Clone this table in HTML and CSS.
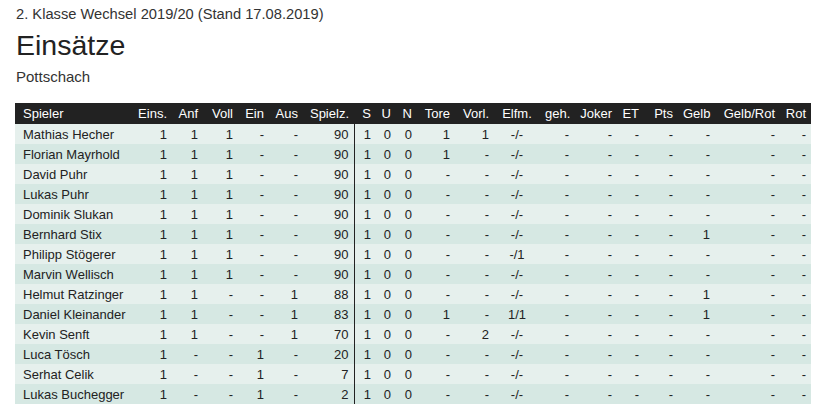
FILE: index.html
```html
<!DOCTYPE html>
<html lang="de">
<head>
<meta charset="utf-8">
<title>Einsätze</title>
<link rel="stylesheet" href="styles.css">
</head>
<body>
<div class="season">2. Klasse Wechsel 2019/20 (Stand 17.08.2019)</div>
<h1 class="title">Einsätze</h1>
<div class="team">Pottschach</div>
<table class="stats">
  <colgroup>
    <col class="w-name"><col class="w-eins"><col class="w-anf"><col class="w-voll"><col class="w-ein"><col class="w-aus"><col class="w-spielz"><col class="w-s"><col class="w-u"><col class="w-n"><col class="w-tore"><col class="w-vorl"><col class="w-elfm"><col class="w-geh"><col class="w-joker"><col class="w-et"><col class="w-pts"><col class="w-gelb"><col class="w-gr"><col class="w-rot">
  </colgroup>
  <thead>
    <tr><th class="name">Spieler</th><th>Eins.</th><th>Anf</th><th>Voll</th><th>Ein</th><th>Aus</th><th>Spielz.</th><th>S</th><th>U</th><th>N</th><th>Tore</th><th>Vorl.</th><th class="mid">Elfm.</th><th>geh.</th><th>Joker</th><th>ET</th><th>Pts</th><th>Gelb</th><th>Gelb/Rot</th><th>Rot</th></tr>
  </thead>
  <tbody>
    <tr><td class="name">Mathias Hecher</td><td>1</td><td>1</td><td>1</td><td>-</td><td>-</td><td class="sep">90</td><td>1</td><td>0</td><td>0</td><td>1</td><td>1</td><td class="mid">-/-</td><td>-</td><td>-</td><td>-</td><td>-</td><td>-</td><td>-</td><td>-</td></tr>
    <tr><td class="name">Florian Mayrhold</td><td>1</td><td>1</td><td>1</td><td>-</td><td>-</td><td class="sep">90</td><td>1</td><td>0</td><td>0</td><td>1</td><td>-</td><td class="mid">-/-</td><td>-</td><td>-</td><td>-</td><td>-</td><td>-</td><td>-</td><td>-</td></tr>
    <tr><td class="name">David Puhr</td><td>1</td><td>1</td><td>1</td><td>-</td><td>-</td><td class="sep">90</td><td>1</td><td>0</td><td>0</td><td>-</td><td>-</td><td class="mid">-/-</td><td>-</td><td>-</td><td>-</td><td>-</td><td>-</td><td>-</td><td>-</td></tr>
    <tr><td class="name">Lukas Puhr</td><td>1</td><td>1</td><td>1</td><td>-</td><td>-</td><td class="sep">90</td><td>1</td><td>0</td><td>0</td><td>-</td><td>-</td><td class="mid">-/-</td><td>-</td><td>-</td><td>-</td><td>-</td><td>-</td><td>-</td><td>-</td></tr>
    <tr><td class="name">Dominik Slukan</td><td>1</td><td>1</td><td>1</td><td>-</td><td>-</td><td class="sep">90</td><td>1</td><td>0</td><td>0</td><td>-</td><td>-</td><td class="mid">-/-</td><td>-</td><td>-</td><td>-</td><td>-</td><td>-</td><td>-</td><td>-</td></tr>
    <tr><td class="name">Bernhard Stix</td><td>1</td><td>1</td><td>1</td><td>-</td><td>-</td><td class="sep">90</td><td>1</td><td>0</td><td>0</td><td>-</td><td>-</td><td class="mid">-/-</td><td>-</td><td>-</td><td>-</td><td>-</td><td>1</td><td>-</td><td>-</td></tr>
    <tr><td class="name">Philipp Stögerer</td><td>1</td><td>1</td><td>1</td><td>-</td><td>-</td><td class="sep">90</td><td>1</td><td>0</td><td>0</td><td>-</td><td>-</td><td class="mid">-/1</td><td>-</td><td>-</td><td>-</td><td>-</td><td>-</td><td>-</td><td>-</td></tr>
    <tr><td class="name">Marvin Wellisch</td><td>1</td><td>1</td><td>1</td><td>-</td><td>-</td><td class="sep">90</td><td>1</td><td>0</td><td>0</td><td>-</td><td>-</td><td class="mid">-/-</td><td>-</td><td>-</td><td>-</td><td>-</td><td>-</td><td>-</td><td>-</td></tr>
    <tr><td class="name">Helmut Ratzinger</td><td>1</td><td>1</td><td>-</td><td>-</td><td>1</td><td class="sep">88</td><td>1</td><td>0</td><td>0</td><td>-</td><td>-</td><td class="mid">-/-</td><td>-</td><td>-</td><td>-</td><td>-</td><td>1</td><td>-</td><td>-</td></tr>
    <tr><td class="name">Daniel Kleinander</td><td>1</td><td>1</td><td>-</td><td>-</td><td>1</td><td class="sep">83</td><td>1</td><td>0</td><td>0</td><td>1</td><td>-</td><td class="mid">1/1</td><td>-</td><td>-</td><td>-</td><td>-</td><td>1</td><td>-</td><td>-</td></tr>
    <tr><td class="name">Kevin Senft</td><td>1</td><td>1</td><td>-</td><td>-</td><td>1</td><td class="sep">70</td><td>1</td><td>0</td><td>0</td><td>-</td><td>2</td><td class="mid">-/-</td><td>-</td><td>-</td><td>-</td><td>-</td><td>-</td><td>-</td><td>-</td></tr>
    <tr><td class="name">Luca Tösch</td><td>1</td><td>-</td><td>-</td><td>1</td><td>-</td><td class="sep">20</td><td>1</td><td>0</td><td>0</td><td>-</td><td>-</td><td class="mid">-/-</td><td>-</td><td>-</td><td>-</td><td>-</td><td>-</td><td>-</td><td>-</td></tr>
    <tr><td class="name">Serhat Celik</td><td>1</td><td>-</td><td>-</td><td>1</td><td>-</td><td class="sep">7</td><td>1</td><td>0</td><td>0</td><td>-</td><td>-</td><td class="mid">-/-</td><td>-</td><td>-</td><td>-</td><td>-</td><td>-</td><td>-</td><td>-</td></tr>
    <tr><td class="name">Lukas Buchegger</td><td>1</td><td>-</td><td>-</td><td>1</td><td>-</td><td class="sep">2</td><td>1</td><td>0</td><td>0</td><td>-</td><td>-</td><td class="mid">-/-</td><td>-</td><td>-</td><td>-</td><td>-</td><td>-</td><td>-</td><td>-</td></tr>
  </tbody>
</table>
</body>
</html>
```
FILE: styles.css
```css
html, body {
  background: #ffffff;
}
body {
  margin: 0;
  padding: 0 14px 0 15px;
  font-family: "Liberation Sans", Arial, sans-serif;
  color: #333333;
}
.season {
  margin: 4px 0 0 1px;
  font-size: 14.7px;
  line-height: 20px;
}
.title {
  margin: 4px 0 0 1px;
  font-size: 28.5px;
  font-weight: normal;
  line-height: 34px;
  color: #222222;
}
.team {
  margin: 5px 0 0 1px;
  font-size: 15px;
  line-height: 20px;
}
.stats {
  margin-top: 16px;
  width: 796px;
  table-layout: fixed;
  border-collapse: collapse;
  font-size: 13px;
}
.stats th {
  background: #222222;
  color: #ffffff;
  font-weight: normal;
  height: 21px;
  padding: 0 5px;
  text-align: right;
  white-space: nowrap;
}
.stats td {
  height: 20px;
  padding: 0 5px;
  text-align: right;
  white-space: nowrap;
  color: #222222;
}
.stats tbody tr:nth-child(odd) td {
  background: #e6f0ed;
}
.stats tbody tr:nth-child(even) td {
  background: #d6e8e3;
}
.stats .name {
  text-align: left;
  padding-left: 8px;
}
.stats .mid {
  text-align: center;
}
.stats td.sep {
  border-right: 1px solid #222222;
}
.w-name { width: 115px; }
.w-eins { width: 42px; }
.w-anf { width: 31px; }
.w-voll { width: 35px; }
.w-ein { width: 31px; }
.w-aus { width: 34px; }
.w-spielz { width: 51px; }
.w-s { width: 22px; }
.w-u { width: 20px; }
.w-n { width: 21px; }
.w-tore { width: 38px; }
.w-vorl { width: 39px; }
.w-elfm { width: 46px; }
.w-geh { width: 34px; }
.w-joker { width: 43px; }
.w-et { width: 27px; }
.w-pts { width: 34px; }
.w-gelb { width: 37px; }
.w-gr { width: 65px; }
.w-rot { width: 31px; }
```
